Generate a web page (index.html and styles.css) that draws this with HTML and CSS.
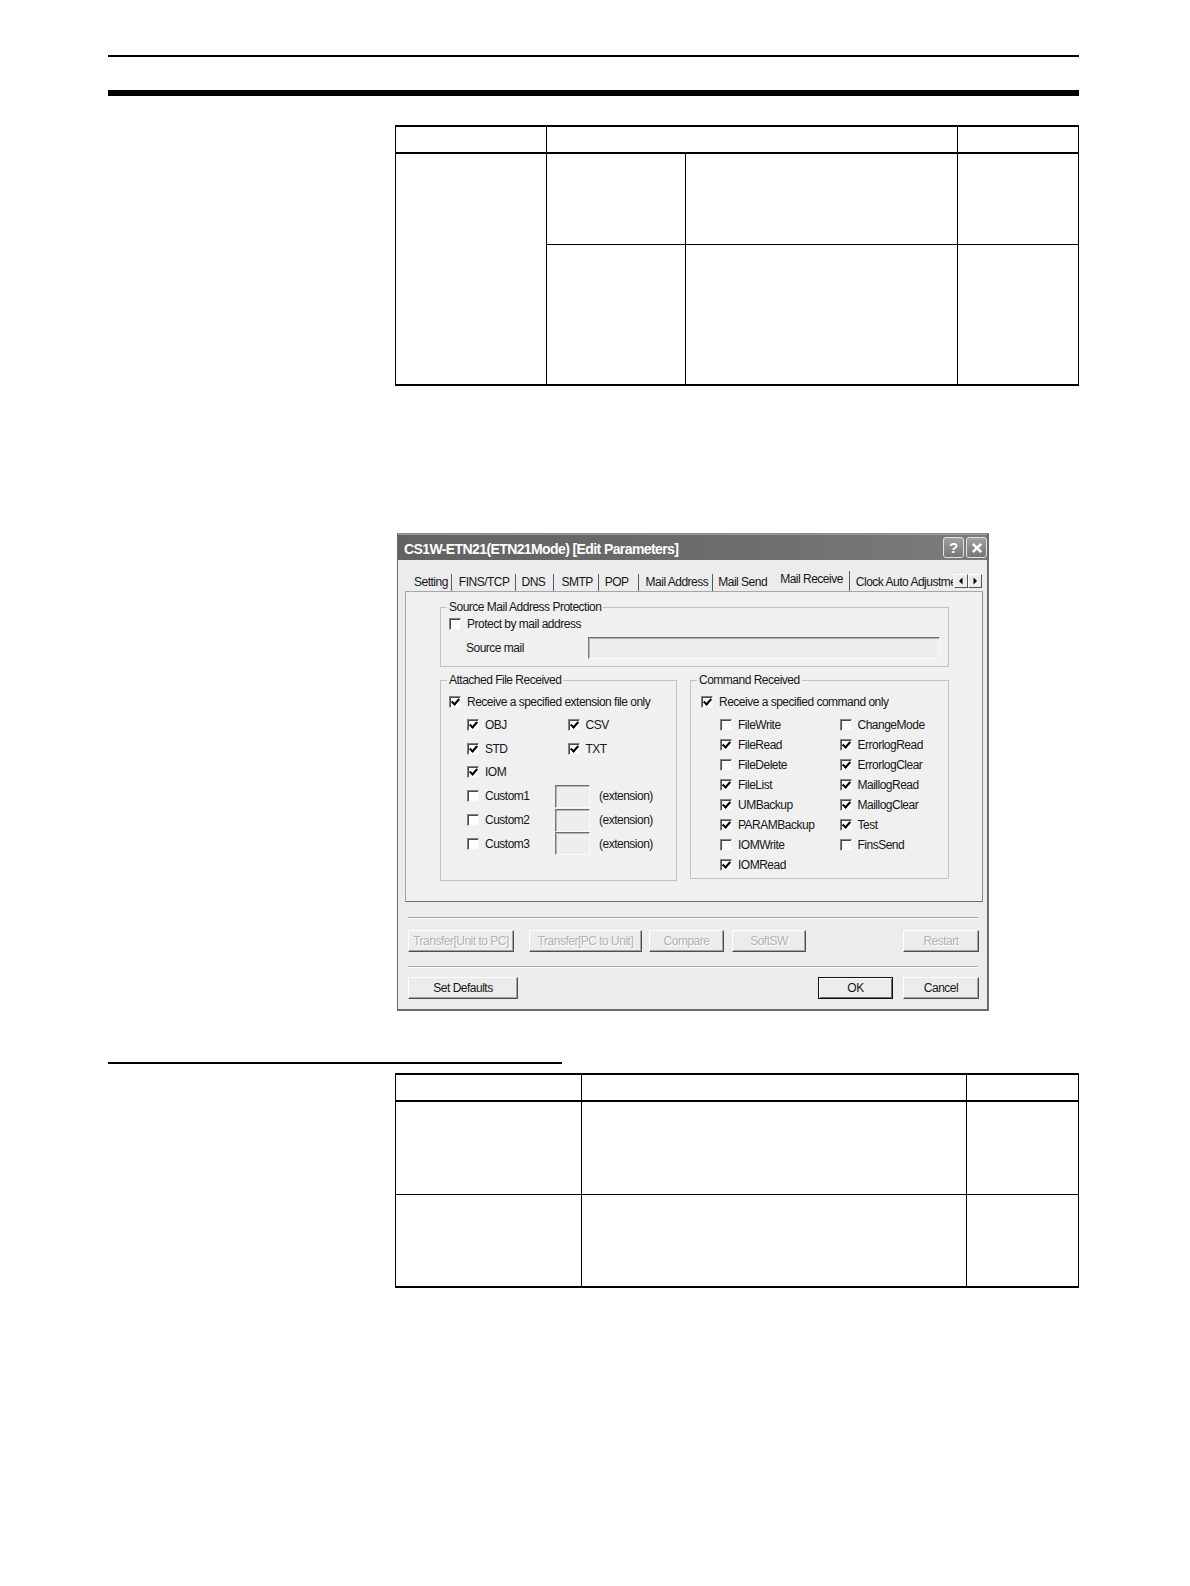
FILE: index.html
```html
<!DOCTYPE html>
<html>
<head>
<meta charset="utf-8">
<title>Mail Receive</title>
<link rel="stylesheet" href="styles.css">
</head>
<body>
<div class="page">
  <div class="rule-thin"></div>
  <div class="rule-thick"></div>

  <table class="grid t1">
    <colgroup><col class="a1"><col class="a2"><col class="a3"><col class="a4"></colgroup>
    <tr class="hd"><td></td><td colspan="2"></td><td></td></tr>
    <tr class="r1"><td rowspan="2"></td><td class="sep"></td><td class="sep"></td><td class="sep"></td></tr>
    <tr class="r2"><td></td><td></td><td></td></tr>
  </table>

  <div class="dialog">
    <div class="titlebar">
      <span class="title">CS1W-ETN21(ETN21Mode) [Edit Parameters]</span>
      <span class="tbtn help">?</span>
      <span class="tbtn close"><svg viewBox="0 0 10 10" width="12" height="12"><path d="M1.5 1.5 L8.5 8.5 M8.5 1.5 L1.5 8.5" stroke="#fff" stroke-width="2" fill="none"/></svg></span>
    </div>

    <div class="tabstrip">
      <div class="tabs">
        <span class="tab first">Setting</span>
        <span class="tab">FINS/TCP</span>
        <span class="tab dns">DNS</span>
        <span class="tab">SMTP</span>
        <span class="tab pop">POP</span>
        <span class="tab maddr">Mail Address</span>
        <span class="tab msend">Mail Send</span>
        <span class="tab active">Mail Receive</span>
        <span class="tab last">Clock Auto Adjustment</span>
      </div>
      <div class="arrows">
        <span class="arr"><svg viewBox="0 0 8 8" width="8" height="8"><polygon points="5.5,0.5 5.5,7.5 2,4" fill="#000"/></svg></span>
        <span class="arr"><svg viewBox="0 0 8 8" width="8" height="8"><polygon points="2.5,0.5 2.5,7.5 6,4" fill="#000"/></svg></span>
      </div>
    </div>

    <div class="panel">
      <fieldset class="grp src">
        <legend>Source Mail Address Protection</legend>
        <div class="chk"><span class="cb"></span><span>Protect by mail address</span></div>
        <div class="srcmail"><span class="lbl">Source mail</span><span class="field wide"></span></div>
      </fieldset>

      <div class="grprow">
        <fieldset class="grp att">
          <legend>Attached File Received</legend>
          <div class="chk"><span class="cb on"></span><span>Receive a specified extension file only</span></div>
          <div class="subgrid att-grid">
            <div class="chk"><span class="cb on"></span><span>OBJ</span></div>
            <div class="chk"><span class="cb on"></span><span>CSV</span></div>
            <div class="chk"><span class="cb on"></span><span>STD</span></div>
            <div class="chk"><span class="cb on"></span><span>TXT</span></div>
            <div class="chk"><span class="cb on"></span><span>IOM</span></div>
            <div class="custom"><div class="chk cname"><span class="cb"></span><span>Custom1</span></div><span class="field ext"></span><span class="extlbl">(extension)</span></div>
            <div class="custom"><div class="chk cname"><span class="cb"></span><span>Custom2</span></div><span class="field ext"></span><span class="extlbl">(extension)</span></div>
            <div class="custom"><div class="chk cname"><span class="cb"></span><span>Custom3</span></div><span class="field ext"></span><span class="extlbl">(extension)</span></div>
          </div>
        </fieldset>

        <fieldset class="grp cmd">
          <legend>Command Received</legend>
          <div class="chk"><span class="cb on"></span><span>Receive a specified command only</span></div>
          <div class="subgrid cmd-grid">
            <div class="chk"><span class="cb"></span><span>FileWrite</span></div>
            <div class="chk"><span class="cb on"></span><span>FileRead</span></div>
            <div class="chk"><span class="cb"></span><span>FileDelete</span></div>
            <div class="chk"><span class="cb on"></span><span>FileList</span></div>
            <div class="chk"><span class="cb on"></span><span>UMBackup</span></div>
            <div class="chk"><span class="cb on"></span><span>PARAMBackup</span></div>
            <div class="chk"><span class="cb"></span><span>IOMWrite</span></div>
            <div class="chk"><span class="cb on"></span><span>IOMRead</span></div>
            <div class="chk"><span class="cb"></span><span>ChangeMode</span></div>
            <div class="chk"><span class="cb on"></span><span>ErrorlogRead</span></div>
            <div class="chk"><span class="cb on"></span><span>ErrorlogClear</span></div>
            <div class="chk"><span class="cb on"></span><span>MaillogRead</span></div>
            <div class="chk"><span class="cb on"></span><span>MaillogClear</span></div>
            <div class="chk"><span class="cb on"></span><span>Test</span></div>
            <div class="chk"><span class="cb"></span><span>FinsSend</span></div>
          </div>
        </fieldset>
      </div>
    </div>

    <div class="hsep first"></div>
    <div class="btnrow row1">
      <span class="btn dis b-t1">Transfer[Unit to PC]</span>
      <span class="btn dis b-t2">Transfer[PC to Unit]</span>
      <span class="btn dis b-cmp">Compare</span>
      <span class="btn dis b-sw">SoftSW</span>
      <span class="btn dis b-rst">Restart</span>
    </div>
    <div class="hsep second"></div>
    <div class="btnrow row2">
      <span class="btn b-def">Set Defaults</span>
      <span class="btn b-ok">OK</span>
      <span class="btn b-cancel">Cancel</span>
    </div>
  </div>

  <div class="rule-under"></div>

  <table class="grid t2">
    <colgroup><col class="b1"><col class="b2"><col class="b3"></colgroup>
    <tr class="hd"><td></td><td></td><td></td></tr>
    <tr class="r1"><td class="sep"></td><td class="sep"></td><td class="sep"></td></tr>
    <tr class="r2"><td></td><td></td><td></td></tr>
  </table>
</div>
</body>
</html>
```

FILE: styles.css
```css
body {
  margin: 0;
  background: #fff;
  font-family: "Liberation Sans", Arial, sans-serif;
}

.page {
  width: 1190px;
  min-height: 1586px;
  padding-top: 55px;
  box-sizing: border-box;
}

.rule-thin {
  width: 971px;
  height: 2px;
  margin-left: 108px;
  background: #000;
}

.rule-thick {
  width: 971px;
  height: 6px;
  margin: 33px 0 0 108px;
  background: #000;
}

.rule-under {
  width: 454px;
  height: 2px;
  margin: 51px 0 0 108px;
  background: #000;
}

/* ---------- empty ruled tables ---------- */
.grid {
  border-collapse: separate;
  border-spacing: 0;
  table-layout: fixed;
  width: 684px;
  margin-left: 395px;
  border-top: 2px solid #000;
  border-left: 1px solid #000;
  border-bottom: 2px solid #000;
}

.grid td {
  padding: 0;
  border-right: 1px solid #000;
}

.grid .hd td { border-bottom: 2px solid #000; }
.grid td.sep { border-bottom: 1px solid #000; }

.t1 { margin-top: 29px; }
.t1 .a1 { width: 151px; }
.t1 .a2 { width: 139px; }
.t1 .a3 { width: 272px; }
.t1 .a4 { width: 121px; }
.t1 .hd { height: 27px; }
.t1 .r1 { height: 91px; }
.t1 .r2 { height: 139px; }

.t2 { margin-top: 9px; }
.t2 .b1 { width: 186px; }
.t2 .b2 { width: 385px; }
.t2 .b3 { width: 112px; }
.t2 .hd { height: 27px; }
.t2 .r1 { height: 93px; }
.t2 .r2 { height: 91px; }

/* ---------- dialog ---------- */
.dialog {
  margin: 147px 0 0 397px;
  width: 592px;
  height: 478px;
  box-sizing: border-box;
  border: 2px solid #6a6a6a;
  border-left-width: 1px;
  border-top: 1px solid #8a8a8a;
  background: #ececec;
  font-size: 12px;
  letter-spacing: -0.5px;
  color: #161616;
  display: flex;
  flex-direction: column;
}

.titlebar {
  height: 26px;
  flex: none;
  display: flex;
  align-items: center;
  padding: 0 0 0 6px;
  background: linear-gradient(90deg, #626262 0%, #6c6c6c 55%, #7c7c7c 100%);
  box-shadow: inset 0 1px #9a9a9a;
}

.title {
  flex: 1;
  padding-top: 3px;
  color: #fff;
  font-weight: bold;
  font-size: 14px;
  letter-spacing: -0.6px;
  white-space: nowrap;
}

.tbtn {
  width: 21px;
  height: 21px;
  box-sizing: border-box;
  border: 1px solid #e2e2e2;
  border-radius: 3px;
  background: linear-gradient(#a0a0a0, #777);
  display: flex;
  align-items: center;
  justify-content: center;
  color: #fff;
  font-weight: bold;
  font-size: 15px;
  letter-spacing: 0;
  margin-top: 1px;
}

.help { margin-right: 2px; }

/* tabs */
.tabstrip {
  height: 31px;
  flex: none;
  display: flex;
  align-items: flex-end;
  padding: 0 5px 0 7px;
}

.tabs {
  flex: 1;
  display: flex;
  align-items: flex-end;
  overflow: hidden;
  white-space: nowrap;
}

.tab {
  flex: none;
  height: 17px;
  line-height: 17px;
  padding: 0 5px 0 7px;
  border-right: 1px solid #5a5a5a;
}

.tab.first { padding: 0 3px 0 9px; }
.tab.dns { padding: 0 8px 0 6px; }
.tab.pop { padding: 0 9px 0 6px; }
.tab.maddr { padding-right: 4px; }
.tab.msend { padding: 0 0 0 5px; border-right: 0; }
.tab.active {
  height: 20px;
  box-sizing: border-box;
  padding: 0 6px 3px 13px;
  line-height: 17px;
}
.tab.last { padding: 0 0 0 6px; border-right: 0; }

.arrows {
  flex: none;
  align-self: flex-start;
  margin: 14px 0 0 1px;
  display: flex;
}

.arr {
  width: 14px;
  height: 14px;
  box-sizing: border-box;
  border: 1px solid;
  border-color: #fff #555 #555 #fff;
  background: #ececec;
  display: flex;
  align-items: center;
  justify-content: center;
}

/* tab page */
.panel {
  height: 311px;
  flex: none;
  box-sizing: border-box;
  margin: 0 4px 0 7px;
  border: 1px solid #a6a6a6;
  border-bottom-color: #6e6e6e;
  border-right-color: #8c8c8c;
  background: #f0f0f0;
  padding: 8px 33px 0 34px;
}

.grp {
  margin: 0;
  min-width: 0;
  border: 1px solid #c2c2c2;
  padding: 3px 8px 7px 8px;
}

.grp legend {
  padding: 0 2px;
  margin-left: -2px;
  line-height: 14px;
}

.chk {
  display: flex;
  align-items: center;
  gap: 6px;
  height: 14px;
  white-space: nowrap;
}

.cb {
  position: relative;
  flex: none;
  width: 12px;
  height: 12px;
  box-sizing: border-box;
  border: 1px solid;
  border-color: #808080 #f4f4f4 #f4f4f4 #808080;
  box-shadow: inset 1px 1px #4a4a4a;
  background: #fff;
}

.cb.on::after {
  content: "";
  position: absolute;
  left: 3px;
  top: 0px;
  width: 3px;
  height: 6px;
  border-right: 2px solid #000;
  border-bottom: 2px solid #000;
  transform: rotate(42deg);
}

.field {
  box-sizing: border-box;
  height: 22px;
  border: 1px solid;
  border-color: #6e6e6e #fafafa #fafafa #7a7a7a;
  box-shadow: inset 1px 1px #b4b4b4;
  background: #eeeeee;
}

.srcmail {
  display: flex;
  align-items: center;
  margin-top: 6px;
  padding-left: 17px;
}

.srcmail .lbl { width: 122px; flex: none; }
.srcmail .wide { flex: 1; }

.grprow {
  display: flex;
  align-items: flex-start;
  gap: 13px;
  margin-top: 6px;
}

.att {
  width: 237px;
  height: 208px;
  box-sizing: border-box;
  padding-top: 8px;
}

.cmd {
  width: 259px;
  height: 206px;
  box-sizing: border-box;
  padding: 8px 8px 7px 10px;
}

.cmd legend { margin-left: -4px; }

.subgrid { display: grid; }

.att-grid {
  margin: 4px 0 0 18px;
  grid-template-columns: 100.5px 1fr;
  grid-auto-rows: 23.8px;
  align-items: center;
}

.custom {
  grid-column: 1 / -1;
  display: flex;
  align-items: center;
}

.custom .cname { width: 88px; flex: none; }
.field.ext { width: 35px; flex: none; height: 23px; }
.extlbl { margin-left: 9px; }

.cmd-grid {
  margin: 6px 0 0 19px;
  grid-template-columns: 119.5px 1fr;
  grid-template-rows: repeat(8, 20px);
  grid-auto-flow: column;
  align-items: center;
}

/* bottom buttons */
.hsep {
  flex: none;
  height: 0;
  border-top: 1px solid #a4a4a4;
  border-bottom: 1px solid #fff;
  margin: 15px 9px 0 10px;
}

.hsep.second { margin-top: 14px; }

.btnrow {
  flex: none;
  display: flex;
  padding: 0 8px 0 10px;
}

.row1 { margin-top: 11px; }
.row2 { margin-top: 9px; }

.btn {
  height: 22px;
  box-sizing: border-box;
  display: flex;
  align-items: center;
  justify-content: center;
  border: 1px solid;
  border-color: #fff #4e4e4e #4e4e4e #fff;
  box-shadow: inset -1px -1px #a2a2a2;
  background: #ececec;
  white-space: nowrap;
}

.btn.dis {
  color: #b2b2b2;
  text-shadow: 1px 1px #fff;
}

.b-t1 { width: 106px; margin-right: 15px; }
.b-t2 { width: 113px; margin-right: 7px; }
.b-cmp { width: 75px; margin-right: 8px; }
.b-sw { width: 74px; }
.b-rst { width: 76px; margin-left: auto; }

.b-def { width: 110px; }
.b-ok {
  width: 75px;
  margin-left: auto;
  border-color: #111;
  box-shadow: inset 1px 1px #fff, inset -1px -1px #6a6a6a;
}
.b-cancel { width: 76px; margin-left: 10px; }
```
